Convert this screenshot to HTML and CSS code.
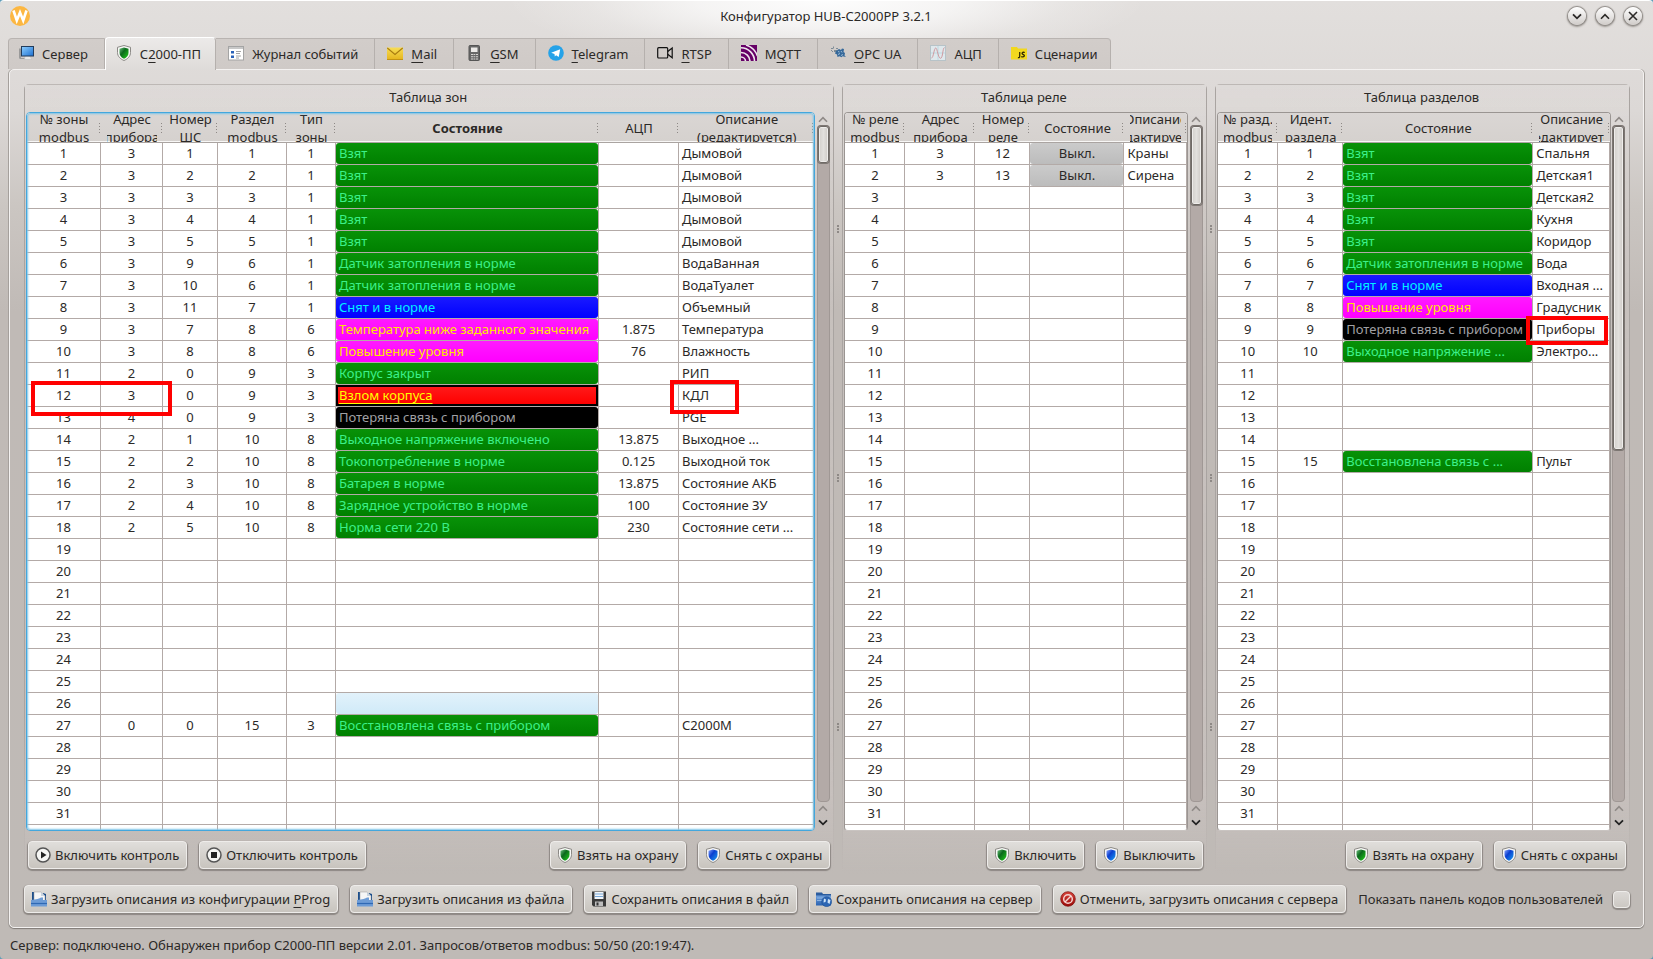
FILE: index.html
```html
<!DOCTYPE html>
<html lang="ru">
<head>
<meta charset="utf-8">
<title>Конфигуратор HUB-C2000PP 3.2.1</title>
<link rel="stylesheet" href="styles.css">
</head>
<body>
<svg class="defs" aria-hidden="true">
  <defs>
    <linearGradient id="g-green" x1="0" y1="0" x2="1" y2="1"><stop offset="0" stop-color="#6fc080"/><stop offset=".4" stop-color="#0b6a1c"/><stop offset="1" stop-color="#22d01a"/></linearGradient>
    <linearGradient id="g-blue" x1="0" y1="0" x2="1" y2="1"><stop offset="0" stop-color="#8fa8ff"/><stop offset=".4" stop-color="#0a3fd0"/><stop offset="1" stop-color="#1aa0f0"/></linearGradient>
    <linearGradient id="g-screen" x1="0" y1="0" x2="1" y2="1"><stop offset="0" stop-color="#8fd0ff"/><stop offset="1" stop-color="#1c6fd0"/></linearGradient>
    <linearGradient id="g-folder" x1="0" y1="0" x2="0" y2="1"><stop offset="0" stop-color="#6fa0dc"/><stop offset="1" stop-color="#2a62b0"/></linearGradient>
    <linearGradient id="g-mail" x1="0" y1="0" x2="0" y2="1"><stop offset="0" stop-color="#f7dd55"/><stop offset="1" stop-color="#e5b41c"/></linearGradient>
    <linearGradient id="g-red" x1="0" y1="0" x2="0" y2="1"><stop offset="0" stop-color="#d8453c"/><stop offset="1" stop-color="#9a0a08"/></linearGradient>
  </defs>
  <symbol id="i-shield-green" viewBox="0 0 16 16"><path d="M8 .5 14.500 2.300v5.200c0 3.800-2.700 6.400-6.500 8-3.800-1.600-6.500-4.200-6.500-8V2.300z" fill="#f8f8f6" stroke="#807e7a" stroke-width=".9"/><path d="M8 2.500 12.500 3.700v4c0 2.800-1.700 4.700-4.500 6.100C5.200 12.400 3.500 10.500 3.500 7.700v-4z" fill="url(#g-green)"/></symbol>
  <symbol id="i-shield-blue" viewBox="0 0 16 16"><path d="M8 .5 14.500 2.300v5.200c0 3.800-2.700 6.400-6.500 8-3.800-1.600-6.500-4.200-6.500-8V2.300z" fill="#f8f8f6" stroke="#807e7a" stroke-width=".9"/><path d="M8 2.500 12.500 3.700v4c0 2.800-1.700 4.700-4.500 6.100C5.200 12.400 3.500 10.500 3.500 7.700v-4z" fill="url(#g-blue)"/></symbol>
  <symbol id="i-server" viewBox="0 0 16 16"><path d="M1 3.500h2v9.500h5v1H2.500A1.500 1.500 0 0 1 1 12.500z" fill="#9a9a9a"/><path d="M7 11h5l1.500 3.500h-7z" fill="#e8e8e8" stroke="#bbb" stroke-width=".5"/><rect x="3.500" y="1.500" width="12" height="9.500" fill="url(#g-screen)" stroke="#223c5c"/></symbol>
  <symbol id="i-log" viewBox="0 0 16 16"><rect x=".5" y="1.500" width="15" height="13.500" fill="#fff" stroke="#a4a4a4"/><path d="M1 2h14v2H1z" fill="#c8c8c8"/><path d="M3 6h3v2.500H3zM3 10.500h3V13H3z" fill="#2a62b8"/><path d="M8 6.500h5M8 8.500h4M8 11h5M8 13h3" stroke="#9a9a9a" stroke-width=".9"/></symbol>
  <symbol id="i-mail" viewBox="0 0 16 16"><rect x="0" y="2.500" width="16" height="12.500" fill="url(#g-mail)"/><path d="M.3 3 8 9.500 15.700 3" fill="none" stroke="#a87b10" stroke-width="1.100"/><path d="M0 14.500h16" stroke="#c39312"/></symbol>
  <symbol id="i-phone" viewBox="0 0 16 16"><rect x="3" y=".5" width="10.500" height="15" rx="1" fill="#686868" stroke="#555"/><rect x="5" y="2.500" width="6.500" height="4.500" fill="#eceae8"/><path d="M5 9.500h2M7.500 9.500h1.800M10 9.500h2M5 11.800h2M7.500 11.800h1.800M10 11.800h2M5 14h2M7.500 14h1.800M10 14h2" stroke="#d6d4d2" stroke-width="1.100"/></symbol>
  <symbol id="i-telegram" viewBox="0 0 16 16"><circle cx="8" cy="8" r="7.800" fill="#25a2e8"/><path d="m3.200 7.800 9-3.600-1.500 7.900-2.600-1.900-1.300 1.300-.3-2.400z" fill="#fff"/></symbol>
  <symbol id="i-camera" viewBox="0 0 16 16"><rect x=".7" y="2.700" width="10" height="10.300" rx="1" fill="none" stroke="#111" stroke-width="1.200"/><path d="m10.700 6.500 4.500-3.500v9.700l-4.500-3.500" fill="none" stroke="#111" stroke-width="1.200"/></symbol>
  <symbol id="i-mqtt" viewBox="0 0 16 16"><path fill="#606" d="M0 0h16v16H0z"/><path d="M0 12a4.500 4.500 0 0 1 4.500 4.500M0 7.500a9 9 0 0 1 9 9M0 2.800A13.500 13.500 0 0 1 13.500 16.500M5 0a18 18 0 0 1 11.500 11" fill="none" stroke="#eee6ee" stroke-width="1.600"/></symbol>
  <symbol id="i-opc" viewBox="0 0 16 16"><path d="M1 3h2v1H1zM3 1.500h1v2H3zM4 5h3v2H4zM2 6h1v1H2zM6 3h2v1H6zM1 5h1v1H1z" fill="#7d8b96"/><path d="m6 6 3-2 2 1 1-1.500 2 .5-.5 3 1.500 1-.5 2.500L16 12l-3.500-.7-1 1-2-1-2 .7-.5-2.500L5 8.500z" fill="#35689a"/><path d="m8 6.500 1.500.5M11 6l1 1.500M8 9.500l2-1M11 10.500l2-1" stroke="#b8d2e6" stroke-width=".8"/></symbol>
  <symbol id="i-wave" viewBox="0 0 16 16"><rect x=".5" y=".5" width="15" height="15" fill="#dfe8ec" stroke="#b7c3c8"/><path d="M8 1v14M1 8h14" stroke="#b4d4e0" stroke-width=".8"/><path d="M1.500 13C3.500 13 4 3 5.700 3S8 13.300 10.500 13.300 12.500 3 14.500 2.500" fill="none" stroke="#d09aa0"/></symbol>
  <symbol id="i-js" viewBox="0 0 16 16"><path d="M0 2h6l1 1.500h9V14.500H0z" fill="#f2d81e"/><path d="M8.700 7v4.300c0 1-.5 1.500-1.800 1.400M13.800 7.500c-2.500-.8-3.700 1-1.800 1.900 2.500 1 1.400 3.100-1.800 2.200" fill="none" stroke="#332c00" stroke-width="1.300"/></symbol>
  <symbol id="i-play" viewBox="0 0 16 16"><circle cx="8" cy="8" r="7" fill="#f5f5f3" stroke="#555" stroke-width="1.500"/><path d="M6 4.500v7L11.500 8z" fill="#222"/></symbol>
  <symbol id="i-stop" viewBox="0 0 16 16"><circle cx="8" cy="8" r="7" fill="#f5f5f3" stroke="#555" stroke-width="1.500"/><path d="M5 5h6v6H5z" fill="#222"/></symbol>
  <symbol id="i-open" viewBox="0 0 16 16"><path d="M1 1h3v9H1zM12 2l3 1v7h-3z" fill="#1d4f8c"/><path d="M3 1h7l4 4v6H3z" fill="#f6f6f6" stroke="#999" stroke-width=".5"/><path d="M10 1v4h4z" fill="#c8d4e0"/><path d="M0 9q8-1 10-2.500h2V9h4v6.500H0z" fill="#6d9cd6"/><path d="M0 12.500h16" stroke="#2f69b4" stroke-width="1.200"/></symbol>
  <symbol id="i-save" viewBox="0 0 16 16"><path d="M1 .5h14v15H2.500L1 14z" fill="#3a3a3a"/><path d="M3.500 1h9v7h-9z" fill="#f2f6fa"/><path d="M4 3h8M4 5.500h8" stroke="#78a8d8"/><path d="M4 10.500h8V15H4z" fill="#bdbdbd"/><path d="M5.500 11.500h2V14.500h-2z" fill="#333"/></symbol>
  <symbol id="i-net" viewBox="0 0 16 16"><path d="M0 1.500h6l1 1.500h8v3H0z" fill="#2b5c9e"/><path d="M0 4.500h15V14.500H0z" fill="url(#g-folder)"/><path d="M1 7h14M1 9.500h6" stroke="#9cc0ea" stroke-width=".8"/><circle cx="10.700" cy="10.700" r="5" fill="#2c66b4" stroke="#1c4a88" stroke-width=".5"/><path d="M8 7.500l2 1-.5 2.500-2 .5M12 8l2.500 1-1 4-2-1.500zM9 13.500l2 .5" fill="#cfe4f8"/></symbol>
  <symbol id="i-cancel" viewBox="0 0 16 16"><circle cx="8" cy="8" r="7.300" fill="url(#g-red)" stroke="#7d0c0a" stroke-width=".7"/><circle cx="8" cy="8" r="4.300" fill="none" stroke="#f4d4d2" stroke-width="1.500"/><path d="m5 11 6-6" stroke="#f4d4d2" stroke-width="1.500"/></symbol>
  <symbol id="i-up" viewBox="0 0 10 7"><path d="M1 5.700 5 1.700l4 4" fill="none" stroke="currentColor" stroke-width="1.600"/></symbol>
  <symbol id="i-down" viewBox="0 0 10 7"><path d="m1 1.300 4 4 4-4" fill="none" stroke="currentColor" stroke-width="1.800"/></symbol>
  <symbol id="i-x" viewBox="0 0 10 10"><path d="m1 1 8 8M9 1 1 9" fill="none" stroke="currentColor" stroke-width="1.600"/></symbol>
</svg>

<div class="window">
  <header class="titlebar">
    <svg class="logo" viewBox="0 0 20 20" aria-hidden="true"><circle cx="10" cy="10" r="10" fill="#fcb742"/><path d="m3.500 4.500 3.300 10 3.200-8 3.200 8 3.300-10" fill="none" stroke="#fff" stroke-width="2.600"/></svg>
    <h1 class="title">Конфигуратор HUB-C2000PP 3.2.1</h1>
    <div class="winbtns">
      <button class="winbtn" aria-label="Свернуть"><svg width="10" height="7"><use href="#i-down"/></svg></button>
      <button class="winbtn" aria-label="Развернуть"><svg width="10" height="7"><use href="#i-up"/></svg></button>
      <button class="winbtn" aria-label="Закрыть"><svg width="10" height="10"><use href="#i-x"/></svg></button>
    </div>
  </header>

  <nav class="tabs" role="tablist">
    <button class="tab" role="tab"><svg class="icon"><use href="#i-server"/></svg><span>Сервер</span></button>
    <button class="tab active" role="tab" aria-selected="true"><svg class="icon"><use href="#i-shield-green"/></svg><span>С<u>2</u>000-ПП</span></button>
    <button class="tab" role="tab"><svg class="icon"><use href="#i-log"/></svg><span>Журнал событий</span></button>
    <button class="tab" role="tab"><svg class="icon"><use href="#i-mail"/></svg><span><u>M</u>ail</span></button>
    <button class="tab" role="tab"><svg class="icon"><use href="#i-phone"/></svg><span><u>G</u>SM</span></button>
    <button class="tab" role="tab"><svg class="icon"><use href="#i-telegram"/></svg><span><u>T</u>elegram</span></button>
    <button class="tab" role="tab"><svg class="icon"><use href="#i-camera"/></svg><span><u>R</u>TSP</span></button>
    <button class="tab" role="tab"><svg class="icon"><use href="#i-mqtt"/></svg><span>M<u>Q</u>TT</span></button>
    <button class="tab" role="tab"><svg class="icon"><use href="#i-opc"/></svg><span><u>O</u>PC UA</span></button>
    <button class="tab" role="tab"><svg class="icon"><use href="#i-wave"/></svg><span>АЦП</span></button>
    <button class="tab" role="tab"><svg class="icon"><use href="#i-js"/></svg><span>Сценарии</span></button>
  </nav>

  <main class="pane">
    <div class="groups">
      <section class="group zones">
        <h2>Таблица зон</h2>
        <div class="view">
          <div class="frame focused">
            <table>
              <colgroup><col class="w74"><col class="w62"><col class="w55"><col class="w69"><col class="w49"><col class="w263"><col class="w80"><col></colgroup>
              <thead><tr>
                <th><div>№ зоны<br>modbus</div></th><th><div>Адрес<br>прибора</div></th><th><div>Номер<br>ШС</div></th><th><div>Раздел<br>modbus</div></th><th><div>Тип<br>зоны</div></th><th class="bold"><div>Состояние</div></th><th><div>АЦП</div></th><th><div>Описание<br>(редактируется)</div></th>
              </tr></thead>
              <tbody id="zones"></tbody>
            </table>
            <div class="mark mark-zone"></div>
            <div class="mark mark-kdl"></div>
          </div>
          <div class="scroll short">
            <svg class="arrow dim"><use href="#i-up"/></svg>
            <div class="groove"><div class="handle"></div></div>
            <svg class="arrow dim"><use href="#i-up"/></svg>
            <svg class="arrow"><use href="#i-down"/></svg>
          </div>
        </div>
        <div class="actions">
          <button class="btn"><svg class="icon"><use href="#i-play"/></svg><span>Включить контроль</span></button>
          <button class="btn"><svg class="icon"><use href="#i-stop"/></svg><span>Отключить контроль</span></button>
          <span class="spacer"></span>
          <button class="btn"><svg class="icon"><use href="#i-shield-green"/></svg><span>Взять на охрану</span></button>
          <button class="btn"><svg class="icon"><use href="#i-shield-blue"/></svg><span>Снять с охраны</span></button>
        </div>
      </section>

      <div class="splitter"><i></i><i></i><i></i></div>

      <section class="group relays">
        <h2>Таблица реле</h2>
        <div class="view">
          <div class="frame">
            <table>
              <colgroup><col class="w60"><col class="w70"><col class="w55"><col class="w94"><col></colgroup>
              <thead><tr>
                <th><div>№ реле<br>modbus</div></th><th><div>Адрес<br>прибора</div></th><th><div>Номер<br>реле</div></th><th><div>Состояние</div></th><th><div>Описание<br>(редактируется)</div></th>
              </tr></thead>
              <tbody id="relays"></tbody>
            </table>
          </div>
          <div class="scroll medium">
            <svg class="arrow dim"><use href="#i-up"/></svg>
            <div class="groove"><div class="handle"></div></div>
            <svg class="arrow dim"><use href="#i-up"/></svg>
            <svg class="arrow"><use href="#i-down"/></svg>
          </div>
        </div>
        <div class="actions">
          <span class="spacer"></span>
          <button class="btn"><svg class="icon"><use href="#i-shield-green"/></svg><span>Включить</span></button>
          <button class="btn"><svg class="icon"><use href="#i-shield-blue"/></svg><span>Выключить</span></button>
        </div>
      </section>

      <div class="splitter"><i></i><i></i><i></i></div>

      <section class="group parts">
        <h2>Таблица разделов</h2>
        <div class="view">
          <div class="frame">
            <table>
              <colgroup><col class="w60"><col class="w65"><col class="w190"><col></colgroup>
              <thead><tr>
                <th><div>№ разд.<br>modbus</div></th><th><div>Идент.<br>раздела</div></th><th><div>Состояние</div></th><th><div>Описание<br>(редактируется)</div></th>
              </tr></thead>
              <tbody id="parts"></tbody>
            </table>
            <div class="mark mark-part"></div>
          </div>
          <div class="scroll long">
            <svg class="arrow dim"><use href="#i-up"/></svg>
            <div class="groove"><div class="handle"></div></div>
            <svg class="arrow dim"><use href="#i-up"/></svg>
            <svg class="arrow"><use href="#i-down"/></svg>
          </div>
        </div>
        <div class="actions">
          <span class="spacer"></span>
          <button class="btn"><svg class="icon"><use href="#i-shield-green"/></svg><span>Взять на охрану</span></button>
          <button class="btn"><svg class="icon"><use href="#i-shield-blue"/></svg><span>Снять с охраны</span></button>
        </div>
      </section>
    </div>

    <div class="toolbar">
      <button class="btn"><svg class="icon"><use href="#i-open"/></svg><span>Загрузить описания из конфигурации <u>P</u>Prog</span></button>
      <button class="btn"><svg class="icon"><use href="#i-open"/></svg><span>Загрузить описания из файла</span></button>
      <button class="btn"><svg class="icon"><use href="#i-save"/></svg><span>Сохранить описания в файл</span></button>
      <button class="btn"><svg class="icon"><use href="#i-net"/></svg><span>Сохранить описания на сервер</span></button>
      <button class="btn"><svg class="icon"><use href="#i-cancel"/></svg><span>Отменить, загрузить описания с сервера</span></button>
      <div class="option">
        <label for="codes">Показать панель кодов пользователей</label>
        <input class="check" type="checkbox" id="codes">
      </div>
    </div>
  </main>

  <footer class="status">Сервер: подключено. Обнаружен прибор С2000-ПП версии 2.01. Запросов/ответов modbus: 50/50 (20:19:47).</footer>
</div>
<script src="app.js"></script>
</body>
</html>
```

FILE: styles.css
```css
* { box-sizing: border-box; }

html { height: 100%; background: #5e9cb8; }

body {
  margin: 0;
  height: 100%;
  font: 13px/18px "Noto Sans", sans-serif;
  color: #2b2927;
}

button { font: inherit; color: inherit; }
u { text-underline-offset: 3px; text-decoration-skip-ink: none; }
h1, h2 { margin: 0; font-size: 13px; font-weight: 400; }

.defs { position: absolute; width: 0; height: 0; }

.window {
  display: flex;
  flex-direction: column;
  height: 100vh;
  border-top: 1px solid #fff;
  border-radius: 4px;
  background:
    radial-gradient(ellipse 320px 64px at 50% 0, #fdfdfd 0, rgba(253, 253, 253, .7) 40%, rgba(253, 253, 253, .2) 75%, rgba(253, 253, 253, 0) 100%),
    linear-gradient(#e2dfdd 0, #dcd8d6 110px, #cbc6c2 205px, #c0bab6 310px, #bfbab6 100%);
}

.titlebar {
  display: grid;
  grid-template-columns: 1fr auto 1fr;
  align-items: center;
  height: 30px;
  padding: 0 11px 0 10px;
}
.logo { width: 20px; height: 20px; }
.winbtns { display: flex; justify-content: flex-end; gap: 10px; }
.winbtn {
  display: flex;
  align-items: center;
  justify-content: center;
  width: 18px;
  height: 18px;
  padding: 0;
  border: 0;
  border-radius: 50%;
  background: linear-gradient(#fff, #d0ccc9);
  box-shadow: 0 0 1px 1px #8f8b87, 0 1px 2px 1px #a09b97;
}

.tabs {
  display: flex;
  align-items: flex-end;
  height: 38px;
  padding-left: 8px;
}
.tab {
  display: flex;
  align-items: center;
  gap: 8px;
  height: 31px;
  padding: 0 16px 0 12px;
  border: 0;
  border-top: 1px solid #b9b4b1;
  border-right: 1px solid #b5b0ad;
  background: linear-gradient(#d2cdca, #cfcac7);
  white-space: nowrap;
}
.tab .icon { margin-bottom: 2px; }
.tab:first-child { padding-left: 9px; border-left: 1px solid #b5b0ad; border-radius: 4px 0 0 0; }
.tab:last-child { padding-right: 12px; border-radius: 0 4px 0 0; }
.tab.active {
  position: relative;
  height: 33px;
  margin-bottom: -1px;
  padding: 0 14px 0 10px;
  border-top: 1px solid #fff;
  border-left: 1px solid #fff;
  border-radius: 4px 4px 0 0;
  background: linear-gradient(#eceae9, #dedbd9);
}
.icon { flex: none; width: 16px; height: 16px; }

.pane {
  display: flex;
  flex: 1;
  flex-direction: column;
  min-height: 0;
  margin: 0 9px;
  padding: 14px 13px 14px 14px;
  border: 1px solid #f4f2f1;
  border-radius: 5px;
  box-shadow: 0 1px 1px #7f7a76, -1px 0 0 #aaa5a1, 1px 0 0 #aaa5a1;
}

.groups { display: flex; flex: 1; min-height: 0; }
.group {
  display: flex;
  flex-direction: column;
  min-width: 0;
  padding: 1px 4px 5px 2px;
  border-radius: 5px;
  background:
    linear-gradient(#a9a4a1, #a9a4a1 80%, rgba(169, 164, 161, 0)) left / 1px 100% no-repeat,
    linear-gradient(#a9a4a1, #a9a4a1 80%, rgba(169, 164, 161, 0)) right / 1px 100% no-repeat,
    linear-gradient(#bdb8b5, #bdb8b5) top / 100% 1px no-repeat,
    linear-gradient(rgba(225, 221, 219, .2), rgba(206, 198, 196, .5) 90%, rgba(206, 198, 196, 0));
}
.zones { flex: 805 1 0; }
.relays { flex: 359 1 0; }
.parts { flex: 409 1 0; }
.group h2 { height: 27px; line-height: 24px; text-align: center; }

.splitter {
  display: flex;
  flex-direction: column;
  align-items: center;
  justify-content: space-around;
  flex: none;
  width: 8px;
  padding: 21px 0 23px;
}
.splitter i { width: 2px; height: 8px; background: repeating-linear-gradient(#8e8986 0 2px, transparent 2px 3px); }

.view { display: flex; flex: 1; gap: 1px; min-height: 0; }
.frame {
  position: relative;
  flex: 1;
  min-width: 0;
  overflow: hidden;
  border: 1px solid #9a9592;
  border-bottom-color: #c9c4c1;
  border-radius: 4px;
  background: #fff;
}
.frame.focused { border-color: #43a7dd; }
.frame.focused::after {
  content: "";
  position: absolute;
  inset: 0;
  border-radius: 3px;
  box-shadow: inset 0 0 2px 1px #7cc4e8;
  pointer-events: none;
}

table {
  width: 100%;
  border-collapse: separate;
  border-spacing: 0;
  table-layout: fixed;
}
.w49 { width: 49px; }
.w55 { width: 55px; }
.w60 { width: 60px; }
.w62 { width: 62px; }
.w65 { width: 65px; }
.w69 { width: 69px; }
.w70 { width: 70px; }
.w74 { width: 74px; }
.w80 { width: 80px; }
.w94 { width: 94px; }
.w190 { width: 190px; }
.w263 { width: 263px; }

th {
  height: 30px;
  padding: 0 6px;
  border-bottom: 1px solid #aaa4a1;
  background:
    repeating-linear-gradient(#8e8986 0 1px, transparent 1px 3px) right 1px top 10px / 1px 10px no-repeat,
    linear-gradient(#dad6d4, #d5d1ce);
  box-shadow: inset 0 -1px #f8f7f6;
  font-weight: 400;
}
th.bold { font-weight: 700; }
th div {
  display: grid;
  align-content: center;
  justify-content: center;
  height: 29px;
  overflow: hidden;
  white-space: nowrap;
}

td {
  height: 22px;
  padding: 0 2px;
  overflow: hidden;
  border-right: 1px solid #b3aaa7;
  border-bottom: 1px solid #b3aaa7;
  line-height: 21px;
  text-align: center;
  text-overflow: ellipsis;
  white-space: nowrap;
}
td.text { padding-left: 3px; text-align: left; }
td.state { padding: 0; text-align: left; }
td.state span {
  display: block;
  height: 21px;
  padding: 0 3px;
  overflow: hidden;
  border-radius: 3px;
  text-overflow: ellipsis;
}
.ok { background: linear-gradient(#089208, #008000); color: #3cf08a; }
.off { background: linear-gradient(#1a1aff, #0000ff); color: #00f0ff; }
.warn { background: linear-gradient(#ff1aff, #ff00ff); color: #ffe600; }
.lost { background: #000; color: #a0a0a4; }
td.state .alarm {
  padding: 0 1px;
  border: 2px solid #000;
  border-radius: 0;
  background: linear-gradient(#ff1a1a, #ff0000);
  color: #ff0;
  line-height: 17px;
  text-decoration: underline;
  text-underline-offset: 3px;
  text-decoration-skip-ink: none;
}
.hover { background: linear-gradient(#e2f2fb, #d0eaf8); }
td.state .relay { background: linear-gradient(#cbcbcb, #bcbcbc); text-align: center; }

.mark { position: absolute; border: 4px solid #f00; }
.mark-zone { left: 4px; top: 268px; width: 141px; height: 35px; }
.mark-kdl { left: 643px; top: 267px; width: 69px; height: 34px; }
.mark-part { right: 2px; top: 203px; width: 82px; height: 29px; }

.scroll {
  display: flex;
  flex: none;
  flex-direction: column;
  align-items: center;
  width: 14px;
  padding: 3px 0 1px;
}
.arrow { flex: none; width: 10px; height: 7px; margin: 1px 0 2px; color: #222; }
.groove ~ .arrow { margin: 3px 0 4px; }
.dim { color: #8f8a87; }
.groove {
  flex: 1;
  width: 13px;
  min-height: 0;
  border: 1px solid #a09895;
  border-radius: 4px;
  background: #b3aaa7;
}
.handle {
  width: 11px;
  border: 1px solid #6f6a66;
  border-radius: 3px;
  background: linear-gradient(90deg, #d2cfcb, #e2e0dd 50%, #cecac6);
  box-shadow: inset 0 0 0 1px #efedeb, 0 0 0 1px #7d7773;
}
.short .handle { height: 37px; }
.medium .handle { height: 79px; }
.long .handle { height: 324px; }

.actions { display: flex; gap: 12px; padding: 10px 0 0 2px; }
.spacer { flex: 1; }
.btn {
  display: flex;
  align-items: center;
  gap: 4px;
  height: 28px;
  padding: 0 7px 0 6px;
  border: 1px solid #eeecea;
  border-radius: 4px;
  background: linear-gradient(#e0dedb, #c8c4be);
  box-shadow: 0 1px 1px 1px #8d8884;
  white-space: nowrap;
}

.toolbar { display: flex; align-items: center; gap: 12px; padding-top: 11px; }
.option {
  display: flex;
  align-items: center;
  gap: 10px;
  margin-left: auto;
  white-space: nowrap;
}
.check {
  appearance: none;
  width: 17px;
  height: 17px;
  margin: 0 1px 0 0;
  border: 1px solid #eeecea;
  border-radius: 4px;
  background: linear-gradient(#dcd9d6, #ccc8c3);
  box-shadow: 0 1px 1px 1px #8d8884;
}

.status { flex: none; height: 31px; padding: 8px 10px 0; }
```

FILE: app.js
```js
const ROWS = 32;

const zones = {
  1: [3, 1, 1, 1, "ok", "Взят", "", "Дымовой"],
  2: [3, 2, 2, 1, "ok", "Взят", "", "Дымовой"],
  3: [3, 3, 3, 1, "ok", "Взят", "", "Дымовой"],
  4: [3, 4, 4, 1, "ok", "Взят", "", "Дымовой"],
  5: [3, 5, 5, 1, "ok", "Взят", "", "Дымовой"],
  6: [3, 9, 6, 1, "ok", "Датчик затопления в норме", "", "ВодаВанная"],
  7: [3, 10, 6, 1, "ok", "Датчик затопления в норме", "", "ВодаТуалет"],
  8: [3, 11, 7, 1, "off", "Снят и в норме", "", "Объемный"],
  9: [3, 7, 8, 6, "warn", "Температура ниже заданного значения", "1.875", "Температура"],
  10: [3, 8, 8, 6, "warn", "Повышение уровня", "76", "Влажность"],
  11: [2, 0, 9, 3, "ok", "Корпус закрыт", "", "РИП"],
  12: [3, 0, 9, 3, "alarm", "Взлом корпуса", "", "КДЛ"],
  13: [4, 0, 9, 3, "lost", "Потеряна связь с прибором", "", "PGE"],
  14: [2, 1, 10, 8, "ok", "Выходное напряжение включено", "13.875", "Выходное ..."],
  15: [2, 2, 10, 8, "ok", "Токопотребление в норме", "0.125", "Выходной ток"],
  16: [2, 3, 10, 8, "ok", "Батарея в норме", "13.875", "Состояние АКБ"],
  17: [2, 4, 10, 8, "ok", "Зарядное устройство в норме", "100", "Состояние ЗУ"],
  18: [2, 5, 10, 8, "ok", "Норма сети 220 В", "230", "Состояние сети ..."],
  26: ["", "", "", "", "hover", "", "", ""],
  27: [0, 0, 15, 3, "ok", "Восстановлена связь с прибором", "", "С2000М"]
};

const relays = {
  1: [3, 12, "relay", "Выкл.", "Краны"],
  2: [3, 13, "relay", "Выкл.", "Сирена"]
};

const parts = {
  1: [1, "ok", "Взят", "Спальня"],
  2: [2, "ok", "Взят", "Детская1"],
  3: [3, "ok", "Взят", "Детская2"],
  4: [4, "ok", "Взят", "Кухня"],
  5: [5, "ok", "Взят", "Коридор"],
  6: [6, "ok", "Датчик затопления в норме", "Вода"],
  7: [7, "off", "Снят и в норме", "Входная ..."],
  8: [8, "warn", "Повышение уровня", "Градусник"],
  9: [9, "lost", "Потеряна связь с прибором", "Приборы"],
  10: [10, "ok", "Выходное напряжение ...", "Электро..."],
  15: [15, "ok", "Восстановлена связь с ...", "Пульт"]
};

// stateAt is the index of the state's class; its label follows it.
function fill(id, data, size, stateAt) {
  const body = document.getElementById(id);
  for (let n = 1; n <= ROWS; n++) {
    const row = body.insertRow();
    row.insertCell().textContent = n < ROWS ? n : "";
    const values = data[n] || new Array(size).fill("");
    for (let i = 0; i < size; i++) {
      const cell = row.insertCell();
      if (i === stateAt) {
        i++;
        if (values[stateAt]) {
          const state = document.createElement("span");
          state.className = values[stateAt];
          state.textContent = values[i];
          cell.className = "state";
          cell.append(state);
        }
      } else {
        cell.textContent = values[i];
        if (i === size - 1) cell.className = "text";
      }
    }
  }
}

fill("zones", zones, 8, 4);
fill("relays", relays, 5, 2);
fill("parts", parts, 4, 1);
```
